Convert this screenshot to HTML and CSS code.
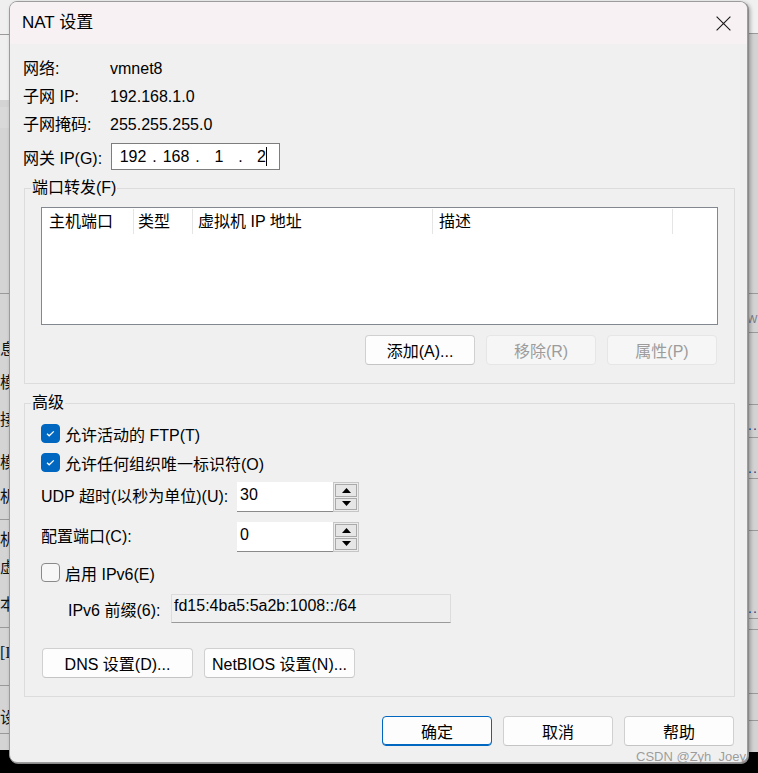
FILE: index.html
```html
<!DOCTYPE html>
<html lang="zh-CN">
<head>
<meta charset="utf-8">
<title>NAT 设置</title>
<link rel="stylesheet" href="styles.css">
</head>
<body>
<div class="screen">
  <div class="backdrop">
    <div class="bd-left">
      <div class="bd-line" style="top:34px"></div>
      <div class="bd-block"></div>
      <div class="bd-line" style="top:293px"></div>
      <span class="bd-ch" style="top:341px">息</span>
      <span class="bd-ch" style="top:374px">模</span>
      <span class="bd-ch" style="top:411px">接</span>
      <span class="bd-ch" style="top:454px">模</span>
      <span class="bd-ch" style="top:488px">机</span>
      <div class="bd-line" style="top:519px"></div>
      <span class="bd-ch" style="top:531px">机</span>
      <span class="bd-ch" style="top:559px">虚</span>
      <span class="bd-ch" style="top:596px">本</span>
      <div class="bd-line" style="top:627px"></div>
      <span class="bd-ch bd-i" style="top:644px">[I]</span>
      <div class="bd-line" style="top:685px"></div>
      <span class="bd-ch" style="top:709px">设</span>
      <div class="bd-line" style="top:733px"></div>
    </div>
    <div class="bd-right">
      <div class="bd-line" style="top:33px"></div>
      <div class="bd-line" style="top:293px"></div>
      <span class="bd-w">W</span>
      <div class="bd-line" style="top:332px"></div>
      <div class="bd-line" style="top:404px"></div>
      <span class="bd-dots" style="top:418px">..</span>
      <div class="bd-line" style="top:437px"></div>
      <span class="bd-dots" style="top:461px">..</span>
      <div class="bd-line" style="top:478px"></div>
      <div class="bd-line" style="top:530px"></div>
      <span class="bd-dots" style="top:601px">..</span>
      <div class="bd-line" style="top:618px"></div>
      <div class="bd-line" style="top:629px"></div>
      <div class="bd-line" style="top:693px"></div>
      <div class="bd-line" style="top:720px"></div>
    </div>
  </div>

  <div class="dialog">
    <div class="titlebar">
      <span class="title">NAT 设置</span>
      <span class="close">
        <svg width="15" height="15" viewBox="0 0 15 15"><path d="M0.6 0.6L14.4 14.4M14.4 0.6L0.6 14.4" stroke="#1a1a1a" stroke-width="1.15" fill="none"/></svg>
      </span>
    </div>
    <div class="dlg-body">
      <div class="info-row"><span class="info-lbl">网络:</span><span>vmnet8</span></div>
      <div class="info-row"><span class="info-lbl">子网 IP:</span><span>192.168.1.0</span></div>
      <div class="info-row"><span class="info-lbl">子网掩码:</span><span>255.255.255.0</span></div>
      <div class="gw-row">
        <span class="gw-lbl">网关 IP(G):</span>
        <div class="ipbox">
          <span class="oct">192</span><span class="dot">.</span>
          <span class="oct">168</span><span class="dot">.</span>
          <span class="oct">1</span><span class="dot">.</span>
          <span class="oct"><span class="caret">2</span></span>
        </div>
      </div>

      <fieldset class="group g-ports">
        <legend>端口转发(F)</legend>
        <div class="listview">
          <div class="lv-head">
            <div class="lv-col c1">主机端口</div>
            <div class="lv-col c2">类型</div>
            <div class="lv-col c3">虚拟机 IP 地址</div>
            <div class="lv-col c4">描述</div>
          </div>
        </div>
        <div class="btn-row">
          <button class="btn">添加(A)...</button>
          <button class="btn" disabled>移除(R)</button>
          <button class="btn" disabled>属性(P)</button>
        </div>
      </fieldset>

      <fieldset class="group g-adv">
        <legend>高级</legend>
        <div class="check-row">
          <span class="cb checked"><svg width="19" height="19" viewBox="0 0 19 19"><path d="M6 9.8L8.2 11.8L12.8 7.4" stroke="#fff" stroke-width="1.3" fill="none"/></svg></span>
          <span>允许活动的 FTP(T)</span>
        </div>
        <div class="check-row">
          <span class="cb checked"><svg width="19" height="19" viewBox="0 0 19 19"><path d="M6 9.8L8.2 11.8L12.8 7.4" stroke="#fff" stroke-width="1.3" fill="none"/></svg></span>
          <span>允许任何组织唯一标识符(O)</span>
        </div>
        <div class="spin-row first">
          <span class="spin-lbl">UDP 超时(以秒为单位)(U):</span>
          <div class="spin-edit">30</div>
          <div class="spin-btns">
            <span class="spin-b"><svg width="9" height="5" viewBox="0 0 9 5"><path d="M0 5L4.5 0L9 5Z" fill="#000"/></svg></span>
            <span class="spin-b"><svg width="9" height="5" viewBox="0 0 9 5"><path d="M0 0L4.5 5L9 0Z" fill="#000"/></svg></span>
          </div>
        </div>
        <div class="spin-row second">
          <span class="spin-lbl">配置端口(C):</span>
          <div class="spin-edit">0</div>
          <div class="spin-btns">
            <span class="spin-b"><svg width="9" height="5" viewBox="0 0 9 5"><path d="M0 5L4.5 0L9 5Z" fill="#000"/></svg></span>
            <span class="spin-b"><svg width="9" height="5" viewBox="0 0 9 5"><path d="M0 0L4.5 5L9 0Z" fill="#000"/></svg></span>
          </div>
        </div>
        <div class="check-row ipv6">
          <span class="cb"></span>
          <span>启用 IPv6(E)</span>
        </div>
        <div class="prefix-row">
          <span class="prefix-lbl">IPv6 前缀(6):</span>
          <div class="prefix-field">fd15:4ba5:5a2b:1008::/64</div>
        </div>
        <div class="dns-row">
          <button class="btn wide">DNS 设置(D)...</button>
          <button class="btn wide">NetBIOS 设置(N)...</button>
        </div>
      </fieldset>

      <div class="dlg-buttons">
        <button class="btn default">确定</button>
        <button class="btn">取消</button>
        <button class="btn">帮助</button>
      </div>
    </div>
  </div>

  <div class="watermark">CSDN @Zyh_Joey</div>
</div>
</body>
</html>
```

FILE: styles.css
```css
* { box-sizing: border-box; }

html, body {
  margin: 0;
  padding: 0;
  background: #000;
}

.screen {
  position: relative;
  width: 758px;
  height: 773px;
  overflow: hidden;
  font-family: "Liberation Sans", "Noto Sans CJK SC", sans-serif;
  font-size: 16px;
  color: #000;
}

/* ---------- background windows ---------- */
.backdrop {
  position: absolute;
  left: 0;
  top: 0;
  width: 758px;
  height: 750px;
  background: #f0f0f0;
}

.bd-left {
  position: absolute;
  left: 0;
  top: 0;
  width: 24px;
  height: 750px;
  background: linear-gradient(#efefef 0, #efefef 100px, #d4d4d4 100px);
}

.bd-right {
  position: absolute;
  right: 0;
  top: 0;
  width: 30px;
  height: 752px;
  background: linear-gradient(#f0f0f0 0, #f0f0f0 33px, #d3d3d3 33px);
}

.bd-line {
  position: absolute;
  left: 0;
  right: 0;
  height: 1px;
  background: #9a9a9a;
}

.bd-block {
  position: absolute;
  left: 0;
  right: 0;
  top: 107px;
  height: 21px;
  background: #d9d9d9;
}

.bd-ch {
  position: absolute;
  left: 0;
  font-size: 16px;
  line-height: 18px;
  color: #111;
}

.bd-i { font-family: "Liberation Serif", serif; }

.bd-w {
  position: absolute;
  left: 19px;
  top: 312px;
  font-size: 11px;
  line-height: 14px;
  color: #7a7a86;
}

.bd-dots {
  position: absolute;
  left: 20px;
  font-size: 14px;
  line-height: 14px;
  color: #1a3f8a;
  letter-spacing: 1px;
}

/* ---------- dialog ---------- */
.dialog {
  position: absolute;
  left: 9px;
  top: 1px;
  width: 739px;
  height: 762px;
  background: #f0f0f0;
  border: 1px solid #9c9c9c;
  border-radius: 8px;
  box-shadow: 1px 1px 0 #8a8a8a, 2px 2px 4px rgba(0, 0, 0, 0.35);
  display: flex;
  flex-direction: column;
}

.titlebar {
  height: 42px;
  flex: none;
  background: #f8f1f3;
  border-radius: 7px 7px 0 0;
  display: flex;
  align-items: center;
  justify-content: space-between;
  padding-left: 12px;
}

.title {
  font-size: 17px;
  line-height: 20px;
  color: #000;
}

.close {
  width: 47px;
  height: 42px;
  display: flex;
  align-items: center;
  justify-content: center;
}

.close svg { display: block; }

.dlg-body {
  flex: 1;
  padding: 11px 12px 0 13px;
  display: flex;
  flex-direction: column;
}

.info-row {
  display: flex;
  height: 28px;
  line-height: 28px;
  white-space: nowrap;
}

.info-lbl { width: 87px; flex: none; }

.gw-row {
  display: flex;
  align-items: center;
  margin-top: 4px;
  height: 27px;
}

.gw-lbl { width: 88px; flex: none; }

.ipbox {
  width: 169px;
  height: 27px;
  border: 1px solid #7d7d7d;
  background: #fff;
  display: flex;
  align-items: center;
  padding-left: 4px;
  line-height: 20px;
}

.oct {
  width: 34px;
  text-align: center;
}

.dot {
  width: 9px;
  text-align: center;
}

.caret {
  display: inline-block;
  border-right: 1px solid #000;
  line-height: 19px;
}

/* ---------- group boxes ---------- */
.group {
  margin: 0 0 0 1px;
  border: 1px solid #dcdcdc;
  min-width: 0;
}

.group legend {
  padding: 0 1px;
  margin-left: -10px;
  line-height: 18px;
  font-size: 16px;
}

.g-ports {
  margin-top: 9px;
  padding: 10px 16px 18px 16px;
}

.g-adv {
  margin-top: 10px;
  padding: 7px 16px 18px 16px;
}

.listview {
  height: 118px;
  border: 1px solid #828790;
  background: #fff;
}

.lv-head {
  display: flex;
  height: 26px;
  padding-top: 1px;
}

.lv-col {
  height: 25px;
  line-height: 26px;
  padding-left: 6px;
  border-right: 1px solid #e5e5e5;
  white-space: nowrap;
}

.lv-col.c1 { width: 92px; padding-left: 7px; }
.lv-col.c2 { width: 59px; padding-left: 4px; }
.lv-col.c3 { width: 240px; padding-left: 5px; }
.lv-col.c4 { width: 240px; padding-left: 6px; }

.btn-row {
  display: flex;
  justify-content: flex-end;
  gap: 11px;
  margin-top: 10px;
  padding-right: 1px;
}

/* ---------- buttons ---------- */
.btn {
  width: 110px;
  height: 30px;
  padding: 0;
  margin: 0;
  font-family: inherit;
  font-size: 16px;
  color: #000;
  background: #fdfdfd;
  border: 1px solid #d0d0d0;
  border-bottom-color: #c4c4c4;
  border-radius: 4px;
  white-space: nowrap;
}

.btn:disabled {
  background: #f6f6f6;
  border-color: #e6e6e6;
  color: #9c9c9c;
}

.btn.default {
  border: 1px solid #0067c0;
  box-shadow: inset 0 -1px 0 #0067c0;
}

.btn.wide { width: 151px; }

/* ---------- advanced ---------- */
.check-row {
  display: flex;
  align-items: center;
  gap: 5px;
  height: 29px;
  white-space: nowrap;
}

.check-row.ipv6 { margin-top: 6px; }

.cb {
  width: 19px;
  height: 19px;
  flex: none;
  border-radius: 4px;
  border: 1px solid #8a8a8a;
  background: #f7f7f7;
}

.cb.checked {
  border-color: #0067c0;
  background: #0067c0;
}

.cb svg { display: block; margin: -1px; }

.spin-row {
  display: flex;
  align-items: stretch;
  height: 30px;
}

.spin-row.first { margin-top: 5px; }
.spin-row.second { margin-top: 10px; }

.spin-lbl {
  width: 196px;
  flex: none;
  line-height: 30px;
  white-space: nowrap;
}

.spin-edit {
  width: 96px;
  background: #fff;
  border-bottom: 1px solid #8a8a8a;
  padding: 3px 0 0 3px;
  line-height: 20px;
}

.spin-btns {
  width: 26px;
  border: 1px solid #c6c6c6;
  padding: 1px;
  display: flex;
  flex-direction: column;
  gap: 1px;
  background: #ececec;
}

.spin-b {
  flex: 1;
  border: 1px solid #a9a9a9;
  background: #e6e6e6;
  display: flex;
  align-items: center;
  justify-content: center;
}

.spin-b svg { display: block; }

.prefix-row {
  display: flex;
  align-items: center;
  margin-top: 7px;
  height: 29px;
  padding-left: 27px;
}

.prefix-lbl {
  width: 103px;
  flex: none;
  white-space: nowrap;
}

.prefix-field {
  width: 280px;
  height: 29px;
  border: 1px solid #dcdcdc;
  border-bottom-color: #9a9a9a;
  background: #f0f0f0;
  padding: 1px 0 0 2px;
  line-height: 20px;
}

.dns-row {
  display: flex;
  gap: 11px;
  margin-top: 25px;
  padding-left: 1px;
}

.dlg-buttons {
  display: flex;
  justify-content: flex-end;
  gap: 11px;
  margin-top: 19px;
  padding-right: 1px;
}

/* ---------- watermark ---------- */
.watermark {
  position: absolute;
  left: 636px;
  top: 750px;
  font-size: 13px;
  line-height: 14px;
  color: rgba(140, 140, 140, 0.85);
  white-space: nowrap;
}
```
